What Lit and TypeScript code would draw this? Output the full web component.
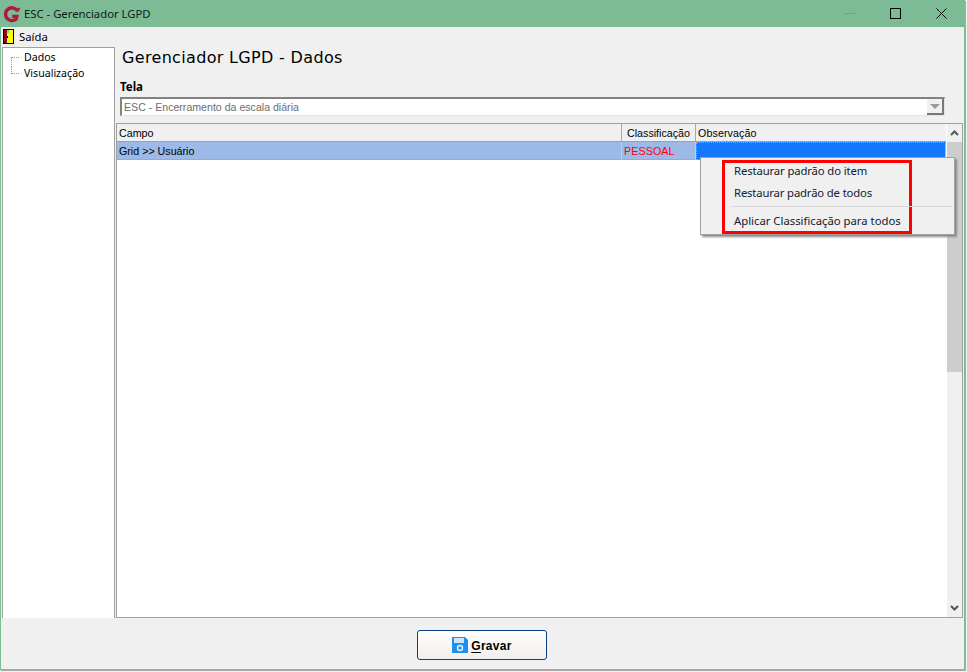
import { LitElement, html, css } from "lit";
import { customElement } from "lit/decorators.js";

@customElement("app-root")
export class AppRoot extends LitElement {
  static styles = css`
    :host { display: block; width: 967px; height: 672px; background: #fff; overflow: hidden; font-family: "Liberation Sans", sans-serif; color: #000; }
    .window { position: relative; box-sizing: border-box; width: 965px; height: 670px; background: #f0f0f0; border-right: 1px solid #7cbb93; border-bottom: 1px solid #7cbb93; border-left: 1px solid #7cbb93; box-shadow: 1px 1px 1px #a8a8a8; display: flex; flex-direction: column; }
    .title { height: 27px; flex: none; background: #7cbb93; display: flex; align-items: center; padding-left: 3px; margin-left: -1px; margin-right: -1px; }
    .logo { width: 18px; height: 18px; flex: none; margin-top: 2px; }
    .title-text { margin-left: 3px; font: 11.3px "Noto Sans", sans-serif; color: #10201a; white-space: nowrap; }
    .ctrls { margin-left: auto; display: flex; align-items: center; padding-right: 1px; }
    .ctrl { width: 46px; height: 27px; display: flex; align-items: center; justify-content: center; }
    .menubar { height: 20px; flex: none; box-sizing: border-box; padding: 0 0 1px 2px; display: flex; align-items: center; gap: 4px; font: 11.3px "Noto Sans", sans-serif; }
    .body { flex: 1; min-height: 0; display: flex; padding-left: 1px; }
    .tree { width: 113px; flex: none; box-sizing: border-box; background: #fff; border: 1px solid #a0a0a0; border-bottom: none; padding-top: 1px; font: 10.6px/16px "Noto Sans", sans-serif; }
    .node { display: flex; height: 16px; padding-left: 8px; }
    .dots { width: 8px; height: 8px; box-sizing: border-box; flex: none; margin-right: 5px; border-left: 1px dotted #999; }
    .first { margin-top: 8px; border-top: 1px dotted #999; }
    .last { border-bottom: 1px dotted #999; margin-top: 1px; }
    .main { flex: 1; min-width: 0; display: flex; flex-direction: column; padding-left: 1px; padding-right: 1px; }
    .heading { font: 16px/20px "DejaVu Sans", sans-serif; margin: 0; padding: 1px 0 0 6px; height: 21px; box-sizing: border-box; letter-spacing: 0.33px; white-space: nowrap; }
    .label { font: bold 11.5px/14px "Noto Sans", sans-serif; padding-left: 4px; margin-top: 11px; height: 15px; box-sizing: border-box; display: flex; align-items: flex-end; }
    .combo { margin: 3px 18px 0 4px; height: 19px; box-sizing: border-box; background: #fff; border: 1px solid #e3e3e3; border-top: 2px solid #828282; border-left: 2px solid #828282; display: flex; align-items: center; font: 10.6px "Liberation Sans", sans-serif; color: #6d6d6d; padding-left: 2px; }
    .arrow { margin-left: auto; width: 17px; height: 16px; background: #f0f0f0; box-sizing: border-box; border-right: 2px solid #777; border-bottom: 2px solid #777; display: flex; align-items: center; justify-content: center; }
    .arrow i { width: 0; height: 0; border-left: 5px solid transparent; border-right: 5px solid transparent; border-top: 5px solid #999; }
    .grid { margin-top: 7px; flex: 1; min-height: 0; box-sizing: border-box; width: 847px; background: #fff; border: 1px solid #a0a0a0; display: flex; }
    .table { flex: 1; min-width: 0; }
    .row { display: grid; grid-template-columns: 505px 74px 1fr; box-sizing: border-box; height: 18px; font: 10.7px/18px "Liberation Sans", sans-serif; }
    .head { background: #f0f0f0; border-bottom: 1px solid #a0a0a0; }
    .head div { padding-left: 2px; border-right: 1px solid #a9a9a9; box-sizing: border-box; white-space: nowrap; overflow: hidden; }
    .head div:nth-child(2) { padding-left: 5px; }
    .head div:nth-child(3) { border-right: none; letter-spacing: 0.1px; }
    .sel { background: #9cb9e8; border-bottom: 1px solid #a9a9a9; }
    .sel > div { padding-left: 2px; box-sizing: border-box; border-right: 1px solid #c9c9d9; }
    .red { color: #ff0000; letter-spacing: 0.1px; }
    .focus { background: #1478ff; outline: 1px dotted #e09a30; outline-offset: -1px; }
    .bar { width: 15px; flex: none; margin-left: 1px; background: #f0f0f0; display: flex; flex-direction: column; align-items: center; }
    .btn { height: 18px; flex: none; width: 100%; display: flex; align-items: center; justify-content: center; }
    .thumb { height: 230px; width: 100%; flex: none; background: #cdcdcd; }
    .grow { flex: 1; }
    .footer { height: 51px; flex: none; display: flex; align-items: center; justify-content: center; padding-right: 2px; }
    .save { width: 130px; height: 30px; margin-top: 3px; box-sizing: border-box; border: 1px solid #0a3f80; border-radius: 3px; background: linear-gradient(#ffffff, #f1eeeb); display: flex; align-items: center; justify-content: center; gap: 3px; font: bold 12px "Liberation Sans", sans-serif; letter-spacing: 0.3px; padding: 2px 0 0 1px; }
    .save svg { margin-top: -2px; }
    .save u { text-underline-offset: 2px; }
    .menu { position: absolute; left: 699px; top: 157px; width: 255px; height: 78px; box-sizing: border-box; background: #f0f0f0; border: 1px solid #a0a0a0; box-shadow: 2px 2px 2px #8a8a8a; font: 11.3px "Noto Sans", sans-serif; color: #12202e; }
    .item { position: absolute; left: 33px; white-space: nowrap; line-height: 16px; }
    .i1 { top: 5px; letter-spacing: -0.12px; } .i2 { top: 27px; letter-spacing: -0.15px; } .i3 { top: 55px; }
    .sep { position: absolute; left: 30px; right: 2px; top: 48px; border-top: 1px solid #d8d8d8; }
    .mark { position: absolute; left: 21px; top: 2px; width: 190px; height: 74px; box-sizing: border-box; border: 3px solid #f00; }
  `;

  render() {
    return html`
      <div class="window">
        <div class="title">
          <svg class="logo" viewBox="0 0 18 18">
            <path d="M14.6 5.2 A6.4 6.4 0 1 0 13 13.2 L13.8 10.4 H9.2" fill="none" stroke="#b1173f" stroke-width="3.4"/>
            <path d="M12 3 L17.5 1.5 L15.5 6 Z" fill="#b1173f"/>
          </svg>
          <span class="title-text">ESC - Gerenciador LGPD</span>
          <div class="ctrls">
            <div class="ctrl"><svg width="11" height="11"><path d="M0 5.5H11" stroke="#6aa582"/></svg></div>
            <div class="ctrl"><svg width="11" height="11"><rect x=".5" y=".5" width="10" height="10" fill="none" stroke="#000"/></svg></div>
            <div class="ctrl"><svg width="11" height="11"><path d="M.5.5L10.5 10.5M10.5.5L.5 10.5" stroke="#000"/></svg></div>
          </div>
        </div>
        <div class="menubar">
          <svg width="12" height="16" viewBox="0 0 12 16">
            <rect x="0" y="0" width="11" height="15" fill="#000"/>
            <rect x="1" y="1" width="3" height="13" fill="#8a0a18"/>
            <path d="M4 1H10V14H4Z" fill="#ffff00"/>
            <path d="M5 1V4" stroke="#10a8c8"/>
            <rect x="4" y="7" width="1" height="2" fill="#000"/>
          </svg>
          <span>Saída</span>
        </div>
        <div class="body">
          <div class="tree">
            <div class="node"><span class="dots first"></span>Dados</div>
            <div class="node"><span class="dots last"></span>Visualização</div>
          </div>
          <div class="main">
            <h1 class="heading">Gerenciador LGPD - Dados</h1>
            <div class="label">Tela</div>
            <div class="combo">ESC - Encerramento da escala diária<span class="arrow"><i></i></span></div>
            <div class="grid">
              <div class="table">
                <div class="row head"><div>Campo</div><div>Classificação</div><div>Observação</div></div>
                <div class="row sel"><div>Grid &gt;&gt; Usuário</div><div class="red">PESSOAL</div><div class="focus"></div></div>
              </div>
              <div class="bar">
                <div class="btn"><svg width="9" height="6"><path d="M1 5L4.5 1.5L8 5" fill="none" stroke="#555" stroke-width="2"/></svg></div>
                <div class="thumb"></div>
                <div class="grow"></div>
                <div class="btn"><svg width="9" height="6"><path d="M1 1L4.5 4.5L8 1" fill="none" stroke="#555" stroke-width="2"/></svg></div>
              </div>
            </div>
          </div>
        </div>
        <div class="footer">
          <button class="save">
            <svg width="16" height="16" viewBox="0 0 16 16">
              <path d="M0 0H13L16 3V16H0Z" fill="#1e90f0"/>
              <rect x="2" y="1" width="10" height="5" fill="#cfe4f7"/>
              <circle cx="8" cy="11" r="2.5" fill="none" stroke="#e8f3fc" stroke-width="1.5"/>
            </svg>
            <span><u>G</u>ravar</span>
          </button>
        </div>
        <div class="menu">
          <div class="mark"></div>
          <div class="item i1">Restaurar padrão do item</div>
          <div class="item i2">Restaurar padrão de todos</div>
          <div class="sep"></div>
          <div class="item i3">Aplicar Classificação para todos</div>
        </div>
      </div>
    `;
  }
}
